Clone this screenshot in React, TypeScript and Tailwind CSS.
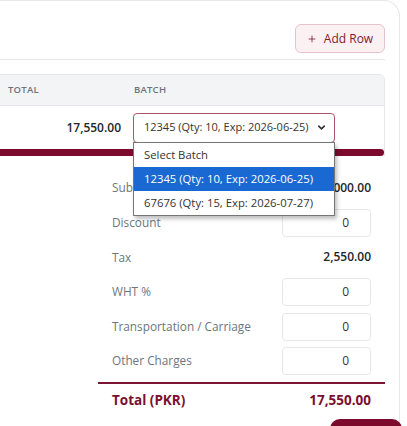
import { ChevronDown, Plus } from "lucide-react"

const rows = [
  { label: "Subtotal", value: "15,000.00" },
  { label: "Discount", input: "0" },
  { label: "Tax", value: "2,550.00" },
  { label: "WHT %", input: "0" },
  { label: "Transportation / Carriage", input: "0" },
  { label: "Other Charges", input: "0" },
]

const options = [
  "Select Batch",
  "12345 (Qty: 10, Exp: 2026-06-25)",
  "67676 (Qty: 15, Exp: 2026-07-27)",
]

export default function App() {
  return (
    <div
      className="relative w-[407px] h-[426px] overflow-hidden whitespace-nowrap bg-white text-[#212529]"
      style={{ fontFamily: '"Open Sans", "Noto Sans", sans-serif' }}
    >
      <div className="mr-[7px] h-full border-r border-t border-gray-200 rounded-tr-2xl pr-[14px]">
        <div className="flex justify-end pt-[23px]">
          <button className="flex h-[29px] w-[90px] items-center justify-center gap-[7px] rounded-md border border-[#e6c3cb] bg-[#fbf1f3] text-[12px] text-[#7b1a34]">
            <Plus size={10} strokeWidth={2} />
            Add Row
          </button>
        </div>
        <div className="mt-[6px] h-px bg-gray-200" />

        {/* table */}
        <div className="mt-[14px] rounded-tr-md border-r border-t border-gray-200">
          <div className="flex h-[30px] items-center bg-[#f3f4f5] text-[9.5px] font-semibold tracking-wide text-[#6c757d]">
            <div className="w-[134px] pl-[8px]">TOTAL</div>
            <div>BATCH</div>
          </div>
          <div className="flex h-[44px] items-center border-t border-gray-200">
            <div className="w-[133px] pr-[12px] text-right text-[12px] font-semibold">17,550.00</div>
            <div className="flex h-[30px] w-[202px] items-center justify-between rounded-[4px] border border-[#a8566b] pl-[10px] pr-[7px] text-[11px] text-[#333]">
              <span>12345 (Qty: 10, Exp: 2026-06-25)</span>
              <ChevronDown size={11} strokeWidth={3.5} />
            </div>
          </div>
          <div className="h-[7px] rounded-r-full bg-[#7c0a2c]" />
        </div>

        {/* summary */}
        <div className="ml-[98px] mt-[15px]">
          <div className="px-[14px]">
            {rows.map((r) => (
              <div key={r.label} className="flex h-[34.6px] items-center justify-between">
                <span className="text-[11.8px] text-[#6c757d]">{r.label}</span>
                {r.input !== undefined ? (
                  <div className="flex h-[28px] w-[89px] items-center justify-end rounded-[4px] border border-gray-200 pr-[21px] text-[12px] text-[#333]">
                    {r.input}
                  </div>
                ) : (
                  <span className="text-[12px] font-semibold">{r.value}</span>
                )}
              </div>
            ))}
          </div>
          <div className="mt-[3px] h-[2px] bg-[#7c1533]" />
          <div className="flex h-[33px] items-center justify-between px-[14px] text-[13.5px] font-bold text-[#7a1030]">
            <span>Total (PKR)</span>
            <span>17,550.00</span>
          </div>
        </div>
      </div>

      {/* open select list */}
      <div className="absolute left-[133px] top-[142px] w-[202px] border border-[#767676] bg-white text-[11.3px] text-[#333] shadow-[2px_3px_4px_rgba(0,0,0,0.25)]">
        {options.map((o, i) => (
          <div
            key={o}
            className={i === 1 ? "flex h-[24px] items-center bg-[#1a69d2] pl-[10px] text-white" : "flex h-[24px] items-center pl-[10px]"}
          >
            {o}
          </div>
        ))}
      </div>

      {/* next button peeking in at the bottom */}
      <div className="absolute left-[330px] top-[419px] h-[20px] w-[72px] rounded-full bg-[#7c0a2c]" />
    </div>
  )
}
